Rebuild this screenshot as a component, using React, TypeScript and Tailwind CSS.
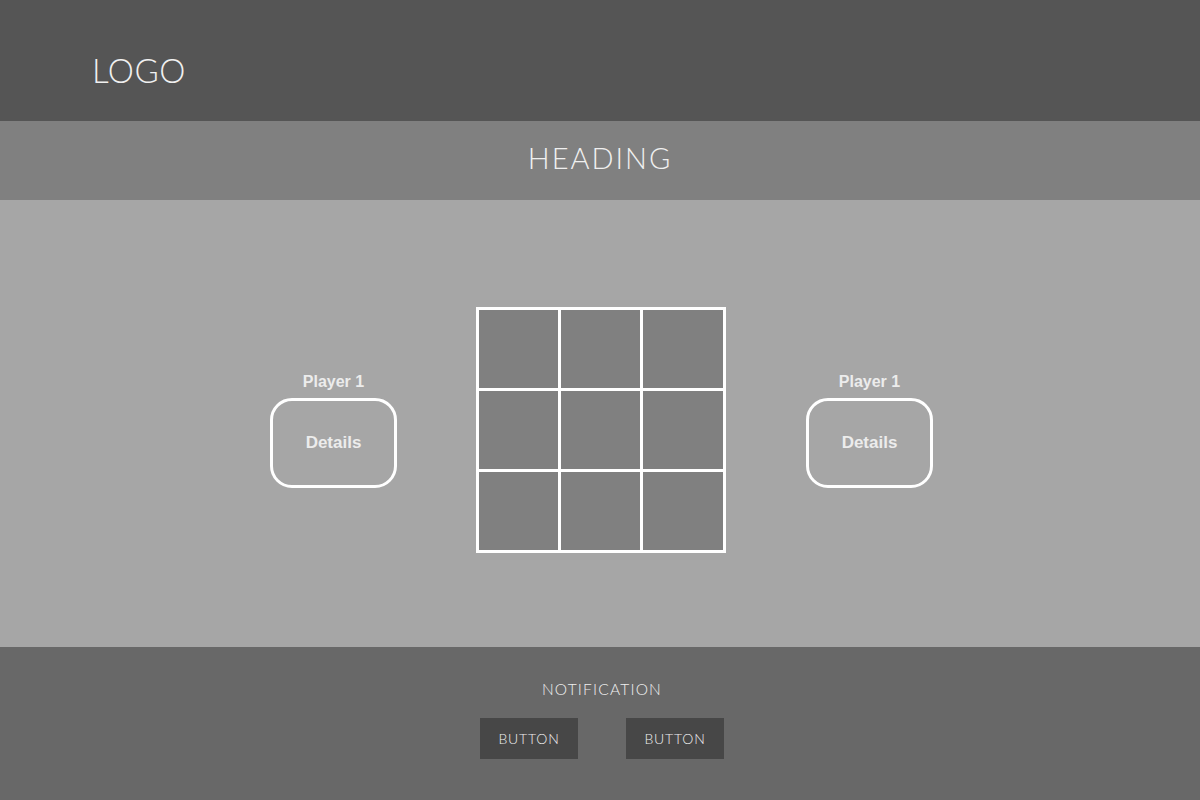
const cells = Array.from({ length: 9 });

const PlayerCard = ({ name }: { name: string }) => {
  return (
    <div className="flex w-[127px] flex-col items-center gap-[6px] font-['Liberation_Sans',Arial,sans-serif] font-bold text-[#ececec]">
      <p className="h-[20px] text-[16px] leading-[20px]">{name}</p>
      <div className="flex h-[90px] w-[127px] items-center justify-center rounded-[22px] border-[3px] border-white text-[17px]">
        Details
      </div>
    </div>
  );
};

export default function App() {
  return (
    <div className="flex h-[800px] w-[1200px] flex-col font-['Lato','Noto_Sans',sans-serif] text-[#f0f0f0]">
      <header className="flex h-[121px] items-center bg-[#555555] pl-[92px]">
        <span className="pt-[20px] text-[33px] font-light tracking-[0.5px]">LOGO</span>
      </header>

      <div className="flex h-[79px] items-center justify-center bg-[#808080]">
        <h1 className="pb-[5px] text-[29px] font-light tracking-[2px]">HEADING</h1>
      </div>

      <main className="flex h-[447px] items-center justify-center bg-[#a6a6a6] pt-[12px] pl-[3px]">
        <PlayerCard name="Player 1" />
        <div className="mr-[80px] ml-[79px] grid grid-cols-[79px_79px_80px] grid-rows-[repeat(3,78px)] gap-[3px] bg-white p-[3px]">
          {cells.map((_, i) => (
            <div key={i} className="bg-[#808080]" />
          ))}
        </div>
        <PlayerCard name="Player 1" />
      </main>

      <footer className="flex flex-1 flex-col items-center bg-[#686868] pt-[31px] pl-[4px]">
        <p className="text-[15.5px] font-light tracking-[1.2px]">NOTIFICATION</p>
        <div className="mt-[17px] flex gap-[48px]">
          <button className="h-[41px] w-[98px] bg-[#474747] text-[14px] font-light tracking-[0.8px]">
            BUTTON
          </button>
          <button className="h-[41px] w-[98px] bg-[#474747] text-[14px] font-light tracking-[0.8px]">
            BUTTON
          </button>
        </div>
      </footer>
    </div>
  );
}
